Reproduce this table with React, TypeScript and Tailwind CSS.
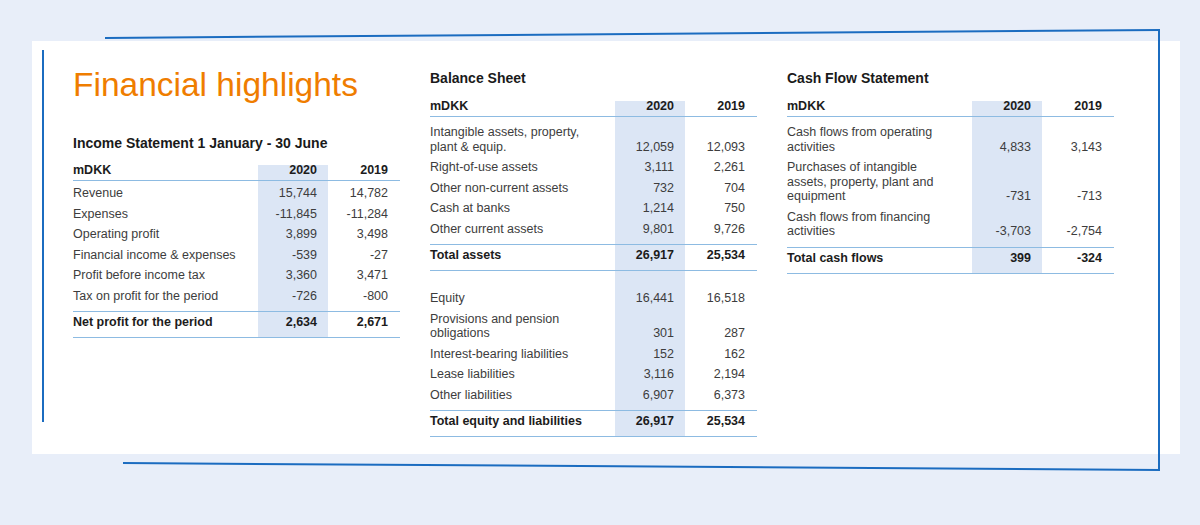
import type { ReactNode } from 'react'

type Line = { label: string[]; a: string; b: string }
type Section = { rows: Line[]; total: Line }

const income: Section[] = [
  {
    rows: [
      { label: ['Revenue'], a: '15,744', b: '14,782' },
      { label: ['Expenses'], a: '-11,845', b: '-11,284' },
      { label: ['Operating profit'], a: '3,899', b: '3,498' },
      { label: ['Financial income & expenses'], a: '-539', b: '-27' },
      { label: ['Profit before income tax'], a: '3,360', b: '3,471' },
      { label: ['Tax on profit for the period'], a: '-726', b: '-800' },
    ],
    total: { label: ['Net profit for the period'], a: '2,634', b: '2,671' },
  },
]

const balance: Section[] = [
  {
    rows: [
      { label: ['Intangible assets, property,', 'plant & equip.'], a: '12,059', b: '12,093' },
      { label: ['Right-of-use assets'], a: '3,111', b: '2,261' },
      { label: ['Other non-current assets'], a: '732', b: '704' },
      { label: ['Cash at banks'], a: '1,214', b: '750' },
      { label: ['Other current assets'], a: '9,801', b: '9,726' },
    ],
    total: { label: ['Total assets'], a: '26,917', b: '25,534' },
  },
  {
    rows: [
      { label: ['Equity'], a: '16,441', b: '16,518' },
      { label: ['Provisions and pension', 'obligations'], a: '301', b: '287' },
      { label: ['Interest-bearing liabilities'], a: '152', b: '162' },
      { label: ['Lease liabilities'], a: '3,116', b: '2,194' },
      { label: ['Other liabilities'], a: '6,907', b: '6,373' },
    ],
    total: { label: ['Total equity and liabilities'], a: '26,917', b: '25,534' },
  },
]

const cash: Section[] = [
  {
    rows: [
      { label: ['Cash flows from operating', 'activities'], a: '4,833', b: '3,143' },
      { label: ['Purchases of intangible', 'assets, property, plant and', 'equipment'], a: '-731', b: '-713' },
      { label: ['Cash flows from financing', 'activities'], a: '-3,703', b: '-2,754' },
    ],
    total: { label: ['Total cash flows'], a: '399', b: '-324' },
  },
]

const grid = 'grid grid-cols-[185px_70px_72px]'
const stripe = 'bg-[#dce6f5]'

function Spacer({ h }: { h: string }) {
  return (
    <div className={grid}>
      <div className={h} />
      <div className={`${h} ${stripe}`} />
      <div className={h} />
    </div>
  )
}

function Row({ line, cell }: { line: Line; cell: string }) {
  return (
    <>
      <div className={cell}>
        {line.label.map((l) => (
          <div key={l}>{l}</div>
        ))}
      </div>
      <div className={`${cell} ${stripe} flex flex-col justify-end items-end pr-[11px]`}>{line.a}</div>
      <div className={`${cell} flex flex-col justify-end items-end pr-[12px]`}>{line.b}</div>
    </>
  )
}

function Table({ sections, top }: { sections: Section[]; top: ReactNode }) {
  const body = 'pt-[4.5px] pb-[1.5px] leading-[14.5px]'
  return (
    <div className="w-[327px] text-[12.5px] text-[#3d3d3d]">
      <div className={`${grid} border-b border-[#8dbbe2] font-bold text-[#1c1c1c] leading-[11px]`}>
        <div className="pb-[3.5px]">mDKK</div>
        <div className={`pb-[3.5px] ${stripe} text-right pr-[11px]`}>2020</div>
        <div className="pb-[3.5px] text-right pr-[12px]">2019</div>
      </div>
      {sections.map((s, i) => (
        <div key={i}>
          {i === 0 ? top : <Spacer h="h-[15.5px]" />}
          {s.rows.map((r) => (
            <div key={r.label[0]} className={grid}>
              <Row line={r} cell={body} />
            </div>
          ))}
          <Spacer h="h-[6.5px]" />
          <div className={`${grid} border-y border-[#8dbbe2] font-bold text-[#1c1c1c]`}>
            <Row line={s.total} cell="pt-[3px] pb-[7.5px] leading-[14.5px]" />
          </div>
        </div>
      ))}
    </div>
  )
}

function Heading({ children }: { children: ReactNode }) {
  return <h2 className="text-[14px] font-bold leading-[16px] text-[#1a1a1a] mb-[15px]">{children}</h2>
}

export default function App() {
  return (
    <div className="relative w-[1200px] h-[525px] overflow-hidden bg-[#e8eef9] font-['Liberation_Sans',Arial,sans-serif] pt-[41px] pl-[32px]">
      <div className="w-[1148px] h-[413px] bg-white flex items-start gap-[30px] pl-[41px]">
        {/* Income statement */}
        <div className="flex flex-col mt-[24.5px]">
          <h1 className="text-[33.5px] leading-[38px] text-[#ef7d00] mb-[31px]">Financial highlights</h1>
          <h2 className="text-[14px] font-bold leading-[16px] text-[#1a1a1a] mb-[14.5px]">
            Income Statement 1 January - 30 June
          </h2>
          <Table sections={income} top={<Spacer h="h-[1px]" />} />
        </div>

        {/* Balance sheet */}
        <div className="flex flex-col mt-[29px]">
          <Heading>Balance Sheet</Heading>
          <Table sections={balance} top={<Spacer h="h-[4px]" />} />
        </div>

        {/* Cash flow */}
        <div className="flex flex-col mt-[29px]">
          <Heading>Cash Flow Statement</Heading>
          <Table sections={cash} top={<Spacer h="h-[4px]" />} />
        </div>
      </div>

      {/* decorative frame lines */}
      <svg className="absolute inset-0 pointer-events-none" width="1200" height="525" viewBox="0 0 1200 525">
        <g stroke="#1b6cc0" strokeWidth="2" fill="none">
          <line x1="105" y1="38" x2="1160" y2="30" />
          <line x1="1159" y1="29" x2="1159" y2="471" />
          <line x1="123" y1="463" x2="1160" y2="470" />
          <line x1="43" y1="50" x2="43" y2="422" />
        </g>
      </svg>
    </div>
  )
}
